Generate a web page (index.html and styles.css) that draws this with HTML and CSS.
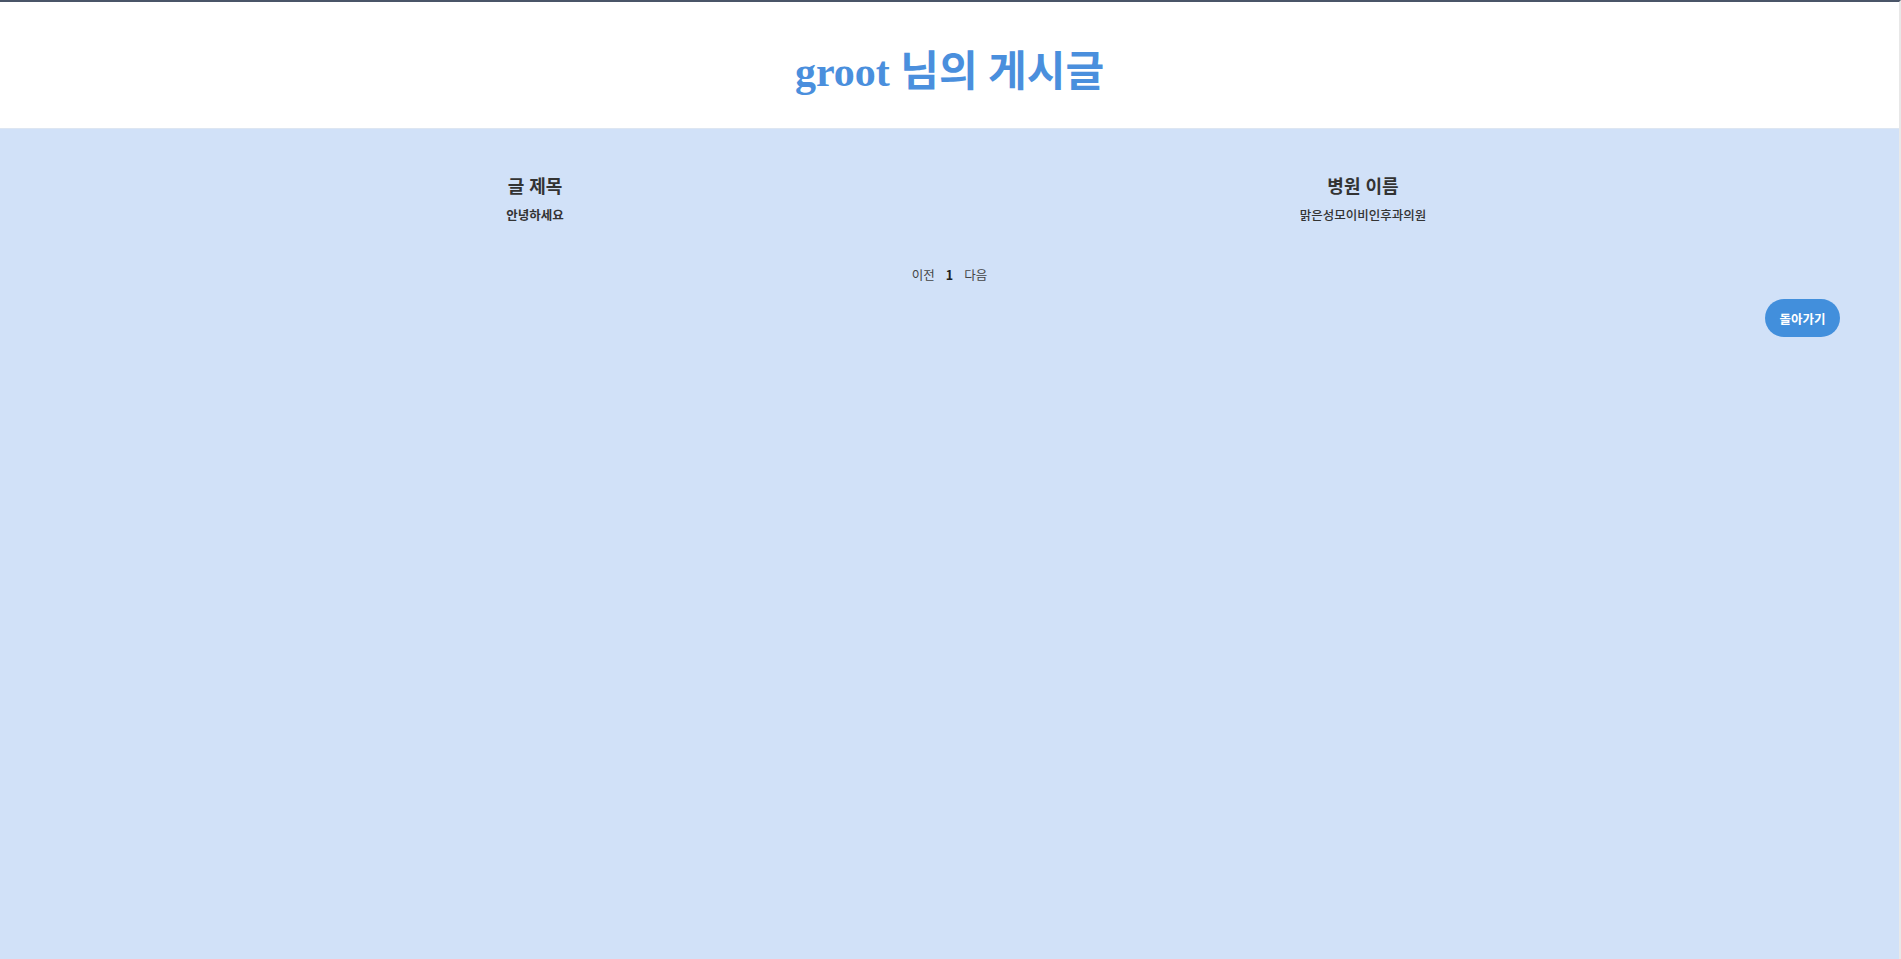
FILE: index.html
```html
<!DOCTYPE html>
<html lang="ko">
<head>
<meta charset="utf-8">
<title>groot 님의 게시글</title>
<link rel="stylesheet" href="styles.css">
</head>
<body>
<div class="page">
  <header class="header">
    <h1 class="title">groot 님의 게시글</h1>
  </header>
  <main class="content">
    <div class="columns">
      <div class="col">
        <h2 class="col-head">글 제목</h2>
        <p class="col-value bold">안녕하세요</p>
      </div>
      <div class="col">
        <h2 class="col-head">병원 이름</h2>
        <p class="col-value">맑은성모이비인후과의원</p>
      </div>
    </div>
    <nav class="pager">
      <span class="pager-item">이전</span>
      <span class="pager-item current">1</span>
      <span class="pager-item">다음</span>
    </nav>
    <div class="actions">
      <button class="back-btn">돌아가기</button>
    </div>
  </main>
</div>
</body>
</html>
```

FILE: styles.css
```css
* { box-sizing: border-box; }
html, body { margin: 0; padding: 0; height: 100%; }
body {
  font-family: "Noto Sans CJK KR", "Noto Sans", sans-serif;
  color: #333;
  background: #fff;
}
.page {
  min-height: 100%;
  display: flex;
  flex-direction: column;
  border-top: 2px solid #4a5568;
  border-right: 2px solid #e8e8e8;
}
.header {
  background: #fff;
  height: 127px;
  display: flex;
  align-items: center;
  justify-content: center;
  border-bottom: 1px solid #dde6f2;
}
.title {
  margin: 0;
  font-family: "Liberation Serif", "Noto Sans CJK KR", serif;
  font-weight: 700;
  font-size: 42px;
  color: #4a8fdd;
  transform: translateY(2px);
}
.content {
  flex: 1;
  background: #d1e1f8;
  padding: 43px 59px 0 121px;
}
.columns {
  display: grid;
  grid-template-columns: 828px 828px;
}
.col {
  text-align: center;
}
.col-head {
  margin: 0;
  font-size: 18px;
  font-weight: 700;
  color: #333;
  line-height: 26px;
}
.col-value {
  margin: 8px 0 0;
  font-size: 12.5px;
  font-weight: 500;
  color: #333;
  line-height: 18px;
}
.col-value.bold { font-weight: 700; }
.pager {
  margin-top: 41px;
  display: flex;
  justify-content: center;
  gap: 11px;
  font-size: 12.5px;
  color: #444;
  padding-right: 62px;
}
.pager-item.current { font-weight: 700; color: #222; }
.actions {
  display: flex;
  justify-content: flex-end;
  margin-top: 15px;
}
.back-btn {
  width: 75px;
  height: 38px;
  border: none;
  border-radius: 19px;
  background: #428fdc;
  color: #fff;
  font-family: "Noto Sans CJK KR", sans-serif;
  font-weight: 700;
  font-size: 12.5px;
  padding: 0;
}
```
